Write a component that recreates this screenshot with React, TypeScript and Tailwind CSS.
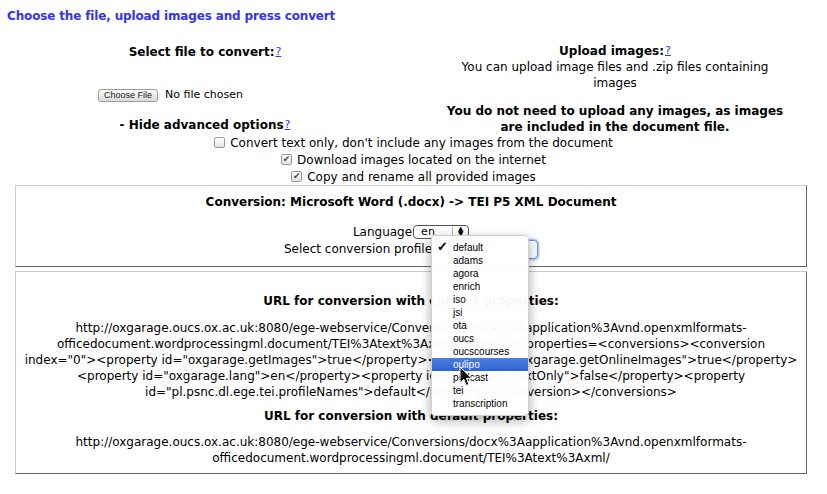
import React from "react";

const Q = () => (
  <span className="text-[11px] text-[#3333ee] underline align-top ml-[1px] font-normal">?</span>
);

const Check = ({ checked }: { checked: boolean }) => (
  <span className="inline-flex items-center justify-center w-[11px] h-[11px] border border-[#9a9a9a] rounded-[2px] bg-gradient-to-b from-[#ffffff] to-[#e2e2e2] mr-[5px] text-[9px] leading-none text-[#444]">
    {checked ? "✔" : ""}
  </span>
);

const profiles = [
  "default",
  "adams",
  "agora",
  "enrich",
  "iso",
  "jsi",
  "ota",
  "oucs",
  "oucscourses",
  "oulipo",
  "podcast",
  "tei",
  "transcription",
];

export default function App() {
  return (
    <div
      className="relative w-[827px] h-[494px] bg-white text-black text-[12px] leading-[16px] overflow-hidden"
      style={{ fontFamily: '"DejaVu Sans", Verdana, sans-serif' }}
    >
      <div className="pt-[8px] pl-[7px] font-bold text-[#3333f0] text-[12px] leading-[16px] tracking-[-0.15px]">
        Choose the file, upload images and press convert
      </div>

      <div className="grid grid-cols-2 w-[820px] mt-[19px]">
        <div className="flex flex-col items-center">
          <div className="font-bold mt-[1px]">
            Select file to convert:<Q />
          </div>
          <div className="w-[214px] mt-[27px] flex items-center h-[16px]">
            <span
              className="h-[13px] px-[5px] border border-[#9c9c9c] rounded-[3px] bg-gradient-to-b from-[#fdfdfd] to-[#dcdcdc] text-[9px] leading-[11px] text-[#222]"
              style={{ fontFamily: '"Liberation Sans", Arial, sans-serif' }}
            >
              Choose File
            </span>
            <span
              className="ml-[7px] text-[11px]"
              style={{ fontFamily: '"DejaVu Sans", sans-serif' }}
            >
              No file chosen
            </span>
          </div>
          <div className="font-bold mt-[14px]">
            - Hide advanced options<Q />
          </div>
        </div>
        <div className="flex flex-col items-center text-center">
          <div className="font-bold">
            Upload images:<Q />
          </div>
          <div className="w-[330px]">
            You can upload image files and .zip files containing images
          </div>
          <div className="font-bold mt-[12px] w-[345px]">
            You do not need to upload any images, as images are included in the document file.
          </div>
        </div>
      </div>

      <div className="flex flex-col items-center mt-[-1px]">
        <div className="h-[17px] flex items-center">
          <Check checked={false} />
          Convert text only, don't include any images from the document
        </div>
        <div className="h-[17px] flex items-center">
          <Check checked={true} />
          Download images located on the internet
        </div>
        <div className="h-[17px] flex items-center">
          <Check checked={true} />
          Copy and rename all provided images
        </div>
      </div>

      <div className="ml-[15px] w-[792px] h-[82px] border border-t-[#cccccc] border-l-[#cccccc] border-r-[#666666] border-b-[#666666] flex flex-col items-center">
        <div className="font-bold mt-[8px]">
          Conversion: Microsoft Word (.docx) -&gt; TEI P5 XML Document
        </div>
        <div className="mt-[14px] flex items-center h-[16px]">
          Language
          <span className="ml-[1px] relative w-[56px] h-[14px] border border-[#555] rounded-[4px] bg-white flex items-center text-[11px]">
            <span className="pl-[7px] flex-1">en</span>
            <span className="w-[16px] h-full border-l border-[#bbb] flex items-center justify-center text-[7px] leading-[5px] flex-col">
              <span>▲</span>
              <span>▼</span>
            </span>
          </span>
        </div>
        <div className="flex items-center h-[18px]">
          Select conversion profile
          <span className="ml-[2px] w-[104px] h-[19px] border border-[#6a9be0] rounded-[4px] shadow-[0_0_2px_1px_#8fb7ee] bg-white" />
        </div>
      </div>

      <div className="ml-[15px] mt-[4px] w-[792px] h-[203px] border border-t-[#cccccc] border-l-[#cccccc] border-r-[#666666] border-b-[#666666] flex flex-col items-center text-center">
        <div className="font-bold mt-[21px]">URL for conversion with current properties:</div>
        <div className="mt-[11px]">
          <div>http://oxgarage.oucs.ox.ac.uk:8080/ege-webservice/Conversions/docx%3Aapplication%3Avnd.openxmlformats-</div>
          <div>officedocument.wordprocessingml.document/TEI%3Atext%3Axml/conversion?properties=&lt;conversions&gt;&lt;conversion</div>
          <div>index="0"&gt;&lt;property id="oxgarage.getImages"&gt;true&lt;/property&gt;&lt;property id="oxgarage.getOnlineImages"&gt;true&lt;/property&gt;</div>
          <div>&lt;property id="oxgarage.lang"&gt;en&lt;/property&gt;&lt;property id="oxgarage.textOnly"&gt;false&lt;/property&gt;&lt;property</div>
          <div>id="pl.psnc.dl.ege.tei.profileNames"&gt;default&lt;/property&gt;&lt;/conversion&gt;&lt;/conversions&gt;</div>
        </div>
        <div className="font-bold mt-[8px]">URL for conversion with default properties:</div>
        <div className="mt-[10px]">
          <div>http://oxgarage.oucs.ox.ac.uk:8080/ege-webservice/Conversions/docx%3Aapplication%3Avnd.openxmlformats-</div>
          <div>officedocument.wordprocessingml.document/TEI%3Atext%3Axml/</div>
        </div>
      </div>

      {/* dropdown menu */}
      <div
        className="absolute left-[431px] top-[235px] w-[98px] py-[5px] bg-white/[0.97] rounded-[4px] border border-[#d0d0d0] shadow-[0_4px_12px_rgba(0,0,0,0.35)] text-[10px] leading-[13px]"
        style={{ fontFamily: '"Liberation Sans", Arial, sans-serif' }}
      >
        {profiles.map((p) => (
          <div
            key={p}
            className={
              p === "oulipo"
                ? "relative h-[13px] pl-[21px] bg-gradient-to-b from-[#4a80e0] to-[#2f63d0] text-white"
                : "relative h-[13px] pl-[21px] text-black"
            }
          >
            {p === "default" && (
              <span className="absolute left-[5px] top-[-1px] text-[13px] font-bold">✓</span>
            )}
            {p}
          </div>
        ))}
      </div>

      {/* mouse cursor */}
      <svg className="absolute left-[459px] top-[366px]" width="14" height="21" viewBox="0 0 14 21">
        <path d="M1 1 L1 17 L4.8 13.3 L7.4 19.5 L10 18.4 L7.5 12.4 L12.8 12.4 Z" fill="#111" stroke="#fff" strokeWidth="1" strokeLinejoin="round" />
      </svg>
    </div>
  );
}
